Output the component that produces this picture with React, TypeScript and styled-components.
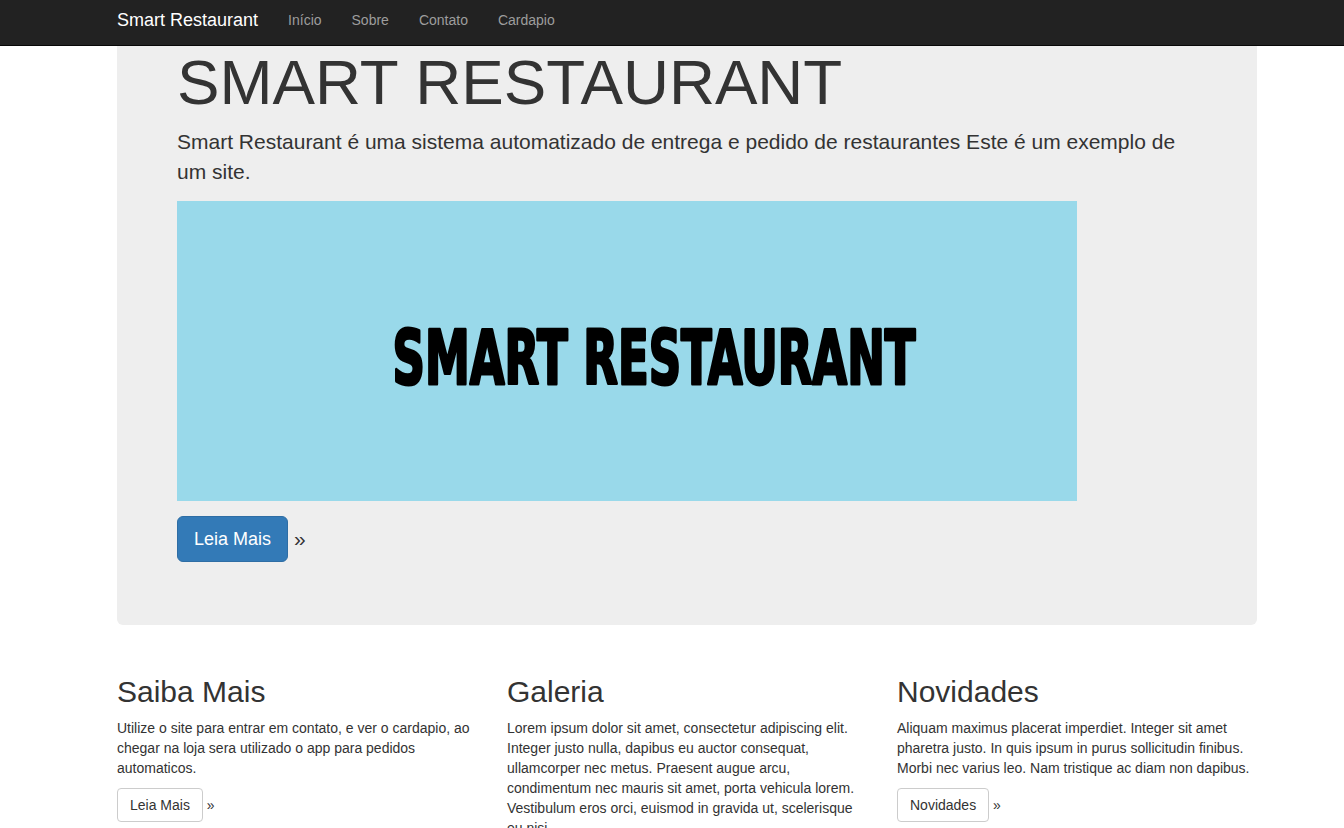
import React from "react";
import styled, { createGlobalStyle } from "styled-components";

const GlobalStyle = createGlobalStyle`
  html, body { overflow: hidden; }
  body {
    margin: 0;
    background: #fff;
    color: #333;
    font-family: "Liberation Sans", Arial, Helvetica, sans-serif;
    font-size: 14px;
    line-height: 1.42857;
  }
  * { box-sizing: border-box; }
`;

const Navbar = styled.nav`
  height: 46px;
  background: #222;
  border-bottom: 1px solid #080808;
`;

const Container = styled.div`
  width: 1170px;
  margin-left: 102px;
  padding: 0 15px;
`;

const NavInner = styled(Container)`
  display: flex;
  align-items: flex-start;
  padding-top: 10px;
`;

const Brand = styled.a`
  color: #fff;
  font-size: 18px;
  line-height: 20px;
  padding-right: 15px;
  text-decoration: none;
`;

const NavLink = styled.a`
  color: #9d9d9d;
  font-size: 14px;
  line-height: 20px;
  padding: 0 15px;
  text-decoration: none;
`;

const Jumbotron = styled.section`
  background: #eee;
  border-radius: 0 0 6px 6px;
  padding: 4px 60px 63px;
`;

const Title = styled.h1`
  margin: 0;
  font-size: 63.7px;
  line-height: 63px;
  font-weight: 400;
  color: #333;
`;

const Lead = styled.p`
  margin: 14px 0 14px;
  font-size: 21px;
  line-height: 30px;
`;

const Banner = styled.svg`
  display: block;
  width: 900px;
  height: 300px;
  margin-bottom: 15px;
`;

const ActionRow = styled.p`
  margin: 0;
  font-size: 21px;
  line-height: 46px;
  height: 46px;
`;

const Button = styled.a<{ $variant: "primary" | "default"; $size: "lg" | "md" }>`
  display: inline-block;
  vertical-align: top;
  text-decoration: none;
  font-weight: 400;
  border: 1px solid ${(p) => (p.$variant === "primary" ? "#2e6da4" : "#ccc")};
  background: ${(p) => (p.$variant === "primary" ? "#337ab7" : "#fff")};
  color: ${(p) => (p.$variant === "primary" ? "#fff" : "#333")};
  font-size: ${(p) => (p.$size === "lg" ? "18px" : "14px")};
  line-height: ${(p) => (p.$size === "lg" ? "24px" : "20px")};
  padding: ${(p) => (p.$size === "lg" ? "10px 16px" : "6px 12px")};
  border-radius: ${(p) => (p.$size === "lg" ? "6px" : "4px")};
`;

const Row = styled.div`
  display: grid;
  grid-template-columns: repeat(3, 390px);
  margin: 50px -15px 0;
`;

const Column = styled.div`
  padding: 0 15px;
`;

const ColTitle = styled.h2`
  margin: 0 0 10px;
  font-size: 30px;
  line-height: 33px;
  font-weight: 400;
`;

const ColText = styled.p`
  margin: 0 0 10px;
  font-size: 14px;
  line-height: 20px;
`;

const ColAction = styled.p`
  margin: 0;
  line-height: 34px;
`;

const columns = [
  {
    title: "Saiba Mais",
    text: "Utilize o site para entrar em contato, e ver o cardapio, ao chegar na loja sera utilizado o app para pedidos automaticos.",
    button: "Leia Mais",
  },
  {
    title: "Galeria",
    text: "Lorem ipsum dolor sit amet, consectetur adipiscing elit. Integer justo nulla, dapibus eu auctor consequat, ullamcorper nec metus. Praesent augue arcu, condimentum nec mauris sit amet, porta vehicula lorem. Vestibulum eros orci, euismod in gravida ut, scelerisque eu nisi.",
    button: "Galeria",
  },
  {
    title: "Novidades",
    text: "Aliquam maximus placerat imperdiet. Integer sit amet pharetra justo. In quis ipsum in purus sollicitudin finibus. Morbi nec varius leo. Nam tristique ac diam non dapibus.",
    button: "Novidades",
  },
];

export default function App() {
  return (
    <>
      <GlobalStyle />
      <Navbar>
        <NavInner>
          <Brand href="#">Smart Restaurant</Brand>
          <NavLink href="#">Início</NavLink>
          <NavLink href="#">Sobre</NavLink>
          <NavLink href="#">Contato</NavLink>
          <NavLink href="#">Cardapio</NavLink>
        </NavInner>
      </Navbar>
      <Container>
        <Jumbotron>
          <Title>SMART RESTAURANT</Title>
          <Lead>
            Smart Restaurant é uma sistema automatizado de entrega e pedido de restaurantes Este é um exemplo de um site.
          </Lead>
          <Banner viewBox="0 0 900 300">
            <rect width="900" height="300" fill="#99d9ea" />
            <text
              x="215.5"
              y="182.5"
              textLength="523"
              lengthAdjust="spacingAndGlyphs"
              fontFamily="'DejaVu Sans Condensed', 'DejaVu Sans', sans-serif"
              fontWeight="bold"
              fontSize="74"
              fill="#000"
              stroke="#000"
              strokeWidth="3"
              strokeLinejoin="round"
            >
              SMART RESTAURANT
            </text>
          </Banner>
          <ActionRow>
            <Button href="#" $variant="primary" $size="lg">
              Leia Mais
            </Button>{" "}
            »
          </ActionRow>
        </Jumbotron>
        <Row>
          {columns.map((c) => (
            <Column key={c.title}>
              <ColTitle>{c.title}</ColTitle>
              <ColText>{c.text}</ColText>
              <ColAction>
                <Button href="#" $variant="default" $size="md">
                  {c.button}
                </Button>{" "}
                »
              </ColAction>
            </Column>
          ))}
        </Row>
      </Container>
    </>
  );
}
